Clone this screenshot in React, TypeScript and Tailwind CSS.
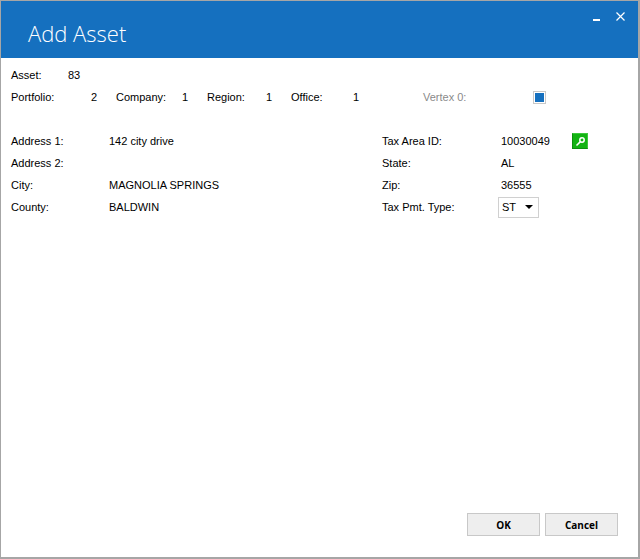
import React from 'react';

function Field({ label, value, labelWidth, valueWidth }: { label: string; value: string; labelWidth: string; valueWidth: string }) {
  return (
    <>
      <span className={labelWidth}>{label}</span>
      <span className={valueWidth}>{value}</span>
    </>
  );
}

export default function App() {
  return (
    <div className="w-[640px] h-[559px] flex flex-col bg-white border-t border-l border-t-[#a6a6a6] border-l-[#a6a6a6] border-r-2 border-b-2 border-r-[#a6a6a6] border-b-[#a6a6a6] text-[11px] leading-[22px] text-black font-['Liberation_Sans',sans-serif]">
      {/* Title bar */}
      <div className="h-[57px] shrink-0 bg-[#1570bf] text-white relative pl-[27px] pt-[14px]">
        <h1 className="text-[22px] leading-[36px] font-light font-['Open_Sans',sans-serif]">Add Asset</h1>
        <div className="absolute top-[18px] right-[38px] w-[7px] h-[2px] bg-white" />
        <svg className="absolute top-[11px] right-[13px]" width="9" height="9" viewBox="0 0 9 9" fill="none" stroke="white" strokeWidth="1.2">
          <path d="M0.5 0.5 L8.5 8.5 M8.5 0.5 L0.5 8.5" />
        </svg>
      </div>

      {/* Body */}
      <div className="flex-1 flex flex-col pl-[10px] pr-[20px] pt-[6px] pb-[21px]">
        <div className="flex h-[22px]">
          <Field label="Asset:" value="83" labelWidth="w-[57px]" valueWidth="w-[30px]" />
        </div>
        <div className="flex h-[22px] items-center">
          <Field label="Portfolio:" value="2" labelWidth="w-[80px]" valueWidth="w-[25px]" />
          <Field label="Company:" value="1" labelWidth="w-[66px]" valueWidth="w-[25px]" />
          <Field label="Region:" value="1" labelWidth="w-[59px]" valueWidth="w-[25px]" />
          <Field label="Office:" value="1" labelWidth="w-[62px]" valueWidth="w-[70px]" />
          <span className="w-[110px] text-[#8a8a8a]">Vertex 0:</span>
          <span className="w-[13px] h-[13px] border border-[#c8c8c8] p-[1px] flex">
            <span className="flex-1 bg-[#1570bf]" />
          </span>
        </div>

        <div className="flex mt-[22px]">
          <div className="w-[371px] flex flex-col">
            <div className="flex h-[22px]"><Field label="Address 1:" value="142 city drive" labelWidth="w-[98px]" valueWidth="" /></div>
            <div className="flex h-[22px]"><Field label="Address 2:" value="" labelWidth="w-[98px]" valueWidth="" /></div>
            <div className="flex h-[22px]"><Field label="City:" value="MAGNOLIA SPRINGS" labelWidth="w-[98px]" valueWidth="" /></div>
            <div className="flex h-[22px]"><Field label="County:" value="BALDWIN" labelWidth="w-[98px]" valueWidth="" /></div>
          </div>
          <div className="flex flex-col">
            <div className="flex h-[22px] items-center">
              <Field label="Tax Area ID:" value="10030049" labelWidth="w-[119px]" valueWidth="w-[71px]" />
              <span className="w-[16px] h-[16px] bg-[#12b312] border border-[#0c8f0c] border-t-[#3cc83c] border-r-[#3cc83c] flex items-center justify-center">
                <svg width="11" height="11" viewBox="0 0 11 11" fill="none" stroke="white" strokeWidth="1.5">
                  <circle cx="7" cy="4" r="2.2" />
                  <path d="M5.4 5.6 L1.5 9.5" />
                </svg>
              </span>
            </div>
            <div className="flex h-[22px]"><Field label="State:" value="AL" labelWidth="w-[119px]" valueWidth="" /></div>
            <div className="flex h-[22px]"><Field label="Zip:" value="36555" labelWidth="w-[119px]" valueWidth="" /></div>
            <div className="flex h-[22px] items-center">
              <span className="w-[116px]">Tax Pmt. Type:</span>
              <span className="w-[41px] h-[21px] border border-[#d0d0d0] flex items-center justify-between pl-[3px] pr-[5px]">
                ST
                <svg width="8" height="4" viewBox="0 0 8 4" fill="black"><path d="M0 0 H8 L4 4 Z" /></svg>
              </span>
            </div>
          </div>
        </div>

        {/* Buttons */}
        <div className="mt-auto flex justify-end gap-[5px]">
          <button className="w-[73px] h-[23px] bg-[#eeeeee] border border-[#c8c8c8] text-[10px] font-bold leading-none font-['Open_Sans',sans-serif]">OK</button>
          <button className="w-[73px] h-[23px] bg-[#eeeeee] border border-[#c8c8c8] text-[10px] font-bold leading-none font-['Open_Sans',sans-serif]">Cancel</button>
        </div>
      </div>
    </div>
  );
}
